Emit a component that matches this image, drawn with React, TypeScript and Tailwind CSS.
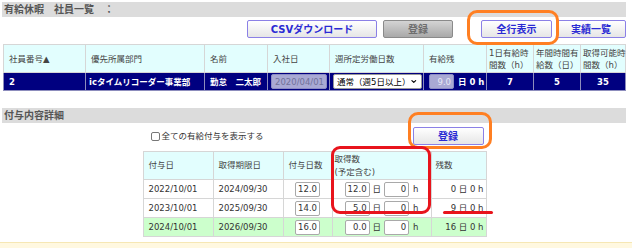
import { ChevronDown } from 'lucide-react'

const btn =
  'flex h-[18px] items-center justify-center rounded-[2px] border border-[#8b80e6] bg-linear-to-b from-white to-[#e6e6e6] text-[10px] font-bold text-[#2a2ad4]'

// cell bases carry no padding, each cell adds its own
const th = 'whitespace-nowrap border border-[#d6d6d6] bg-[#e2fefe] text-left font-normal text-[#444]'
const td = 'whitespace-nowrap border border-[#d6d6d6]'
const navy = 'whitespace-nowrap border border-[#8d8dbd]'

function NumBox({ value }: { value: string }) {
  return (
    <span className="inline-flex h-[15px] w-[25px] items-center justify-end rounded-[2px] border border-[#a9a9a9] bg-white pr-[2px] text-[#333]">
      {value}
    </span>
  )
}

const grants = [
  { date: '2022/10/01', limit: '2024/09/30', days: '12.0', used: '12.0', rest: '0', green: false },
  { date: '2023/10/01', limit: '2025/09/30', days: '14.0', used: '5.0', rest: '9', green: false },
  { date: '2024/10/01', limit: '2026/09/30', days: '16.0', used: '0.0', rest: '16', green: true },
]

export default function App() {
  return (
    <div className="relative h-[248px] w-[632px] overflow-hidden bg-white font-['DejaVu_Sans','Noto_Sans_CJK_JP',sans-serif] text-[8.5px] text-[#333]">
      <div className="ml-[2px] w-[624px] pt-[2px]">
        {/* 社員一覧 */}
        <div className="flex h-[15px] items-center bg-[#dcdcdc] pl-[2px] text-[10px] font-bold text-[#555]">
          有給休暇　社員一覧　：
        </div>

        <div className="mt-[3px] flex justify-end">
          <button className={`${btn} w-[130px]`}>CSVダウンロード</button>
          <button className="ml-[6px] flex h-[18px] w-[70px] items-center justify-center rounded-[2px] border border-[#8a8a8a] bg-linear-to-b from-[#d4d4d4] to-[#a9a9a9] text-[10px] font-bold text-[#6e6e6e]">
            登録
          </button>
          <button className={`${btn} ml-[28px] w-[71px]`}>全行表示</button>
          <button className={`${btn} ml-[4px] w-[70px]`}>実績一覧</button>
        </div>

        <table className="mt-[6px] ml-[1px] w-[622px] table-fixed border-collapse">
          <colgroup>
            <col className="w-[82px]" />
            <col className="w-[119px]" />
            <col className="w-[63px]" />
            <col className="w-[62px]" />
            <col className="w-[94px]" />
            <col className="w-[63px]" />
            <col className="w-[47px]" />
            <col className="w-[47px]" />
            <col className="w-[45px]" />
          </colgroup>
          <thead>
            <tr className="h-[28px] leading-[12px]">
              <th className={`${th} pl-[5px]`}>社員番号▲</th>
              <th className={`${th} pl-[5px]`}>優先所属部門</th>
              <th className={`${th} pl-[5px]`}>名前</th>
              <th className={`${th} pl-[5px]`}>入社日</th>
              <th className={`${th} pl-[5px]`}>週所定労働日数</th>
              <th className={`${th} pl-[5px]`}>有給残</th>
              <th className={`${th} pl-[2px]`}>
                1日有給時
                <br />
                間数（h）
              </th>
              <th className={`${th} pl-[2px]`}>
                年間時間有
                <br />
                給数（日）
              </th>
              <th className={`${th} pl-[2px]`}>
                取得可能時
                <br />
                間数（h）
              </th>
            </tr>
          </thead>
          <tbody>
            <tr className="h-[18px] bg-[#000080] font-bold leading-[12px] text-white">
              <td className={`${navy} pl-[5px]`}>2</td>
              <td className={`${navy} pl-[3px]`}>icタイムリコーダー事業部</td>
              <td className={`${navy} pl-[5px]`}>勤怠　二太郎</td>
              <td className={`${navy} pl-[3px]`}>
                <span className="flex h-[15px] w-[56px] items-center justify-end rounded-[2px] border border-[#8c8cc4] bg-[#a9a9d4] pr-[2px] font-normal text-[#72729a]">
                  2020/04/01
                </span>
              </td>
              <td className={`${navy} pl-[3px]`}>
                <span className="flex h-[15px] w-[89px] items-center justify-between rounded-[2px] border border-[#999] bg-white px-[3px] font-normal text-black">
                  通常（週5日以上）
                  <ChevronDown size={9} strokeWidth={3.5} />
                </span>
              </td>
              <td className={`${navy} pl-[5px]`}>
                <span className="flex items-center">
                  <span className="flex h-[15px] w-[25px] items-center justify-end rounded-[2px] border border-[#8c8cc4] bg-[#a9a9d4] pr-[2px] font-normal text-[#e8e8f4]">
                    9.0
                  </span>
                  <span className="ml-[4px]">日 0 h</span>
                </span>
              </td>
              <td className={`${navy} text-center`}>7</td>
              <td className={`${navy} text-center`}>5</td>
              <td className={`${navy} text-center`}>35</td>
            </tr>
          </tbody>
        </table>

        {/* 付与内容詳細 */}
        <div className="mt-[17px] flex h-[15px] items-center bg-[#dcdcdc] pl-[2px] text-[10px] font-bold text-[#555]">
          付与内容詳細
        </div>

        <div className="mx-auto w-[343px]">
          <div className="mt-[4px] flex h-[18px] items-center justify-between">
            <label className="ml-[8px] flex items-center text-[#333]">
              <span className="mr-[2px] h-[9px] w-[9px] rounded-[2px] border border-[#777] bg-white" />
              全ての有給付与を表示する
            </label>
            <button className={`${btn} mr-[2px] w-[71px]`}>登録</button>
          </div>

          <table className="mt-[6px] w-[343px] table-fixed border-collapse">
            <colgroup>
              <col className="w-[70px]" />
              <col className="w-[70px]" />
              <col className="w-[49px]" />
              <col className="w-[99px]" />
              <col className="w-[55px]" />
            </colgroup>
            <thead>
              <tr className="h-[28px] leading-[13px]">
                <th className={`${th} pl-[5px]`}>付与日</th>
                <th className={`${th} pl-[5px]`}>取得期限日</th>
                <th className={`${th} pl-[5px]`}>付与日数</th>
                <th className={`${th} pl-[2px]`}>
                  取得数
                  <br />
                  (予定含む)
                </th>
                <th className={`${th} pl-[4px]`}>残数</th>
              </tr>
            </thead>
            <tbody>
              {grants.map((g) => (
                <tr
                  key={g.date}
                  className={`h-[19px] leading-[12px] ${g.green ? 'bg-[#ccffcc]' : 'bg-white'}`}
                >
                  <td className={`${td} pl-[5px]`}>{g.date}</td>
                  <td className={`${td} pl-[5px]`}>{g.limit}</td>
                  <td className={`${td} text-center`}>
                    <NumBox value={g.days} />
                  </td>
                  <td className={td}>
                    <span className="flex items-center justify-center">
                      <NumBox value={g.used} />
                      <span className="mx-[3px]">日</span>
                      <NumBox value="0" />
                      <span className="ml-[4px]">h</span>
                    </span>
                  </td>
                  <td className={`${td} pr-[2px] text-right`}>{g.rest} 日 0 h</td>
                </tr>
              ))}
            </tbody>
          </table>
        </div>
      </div>

      <div className="absolute bottom-0 left-0 h-[6px] w-full border-t border-[#f6e7b4] bg-[#fff8e0]" />

      {/* annotations */}
      <div className="pointer-events-none absolute top-[10px] left-[467px] h-[35px] w-[92px] rounded-[10px] border-[3.5px] border-[#ff7f22]" />
      <div className="pointer-events-none absolute top-[112px] left-[408px] h-[37px] w-[84px] rounded-[10px] border-[3.5px] border-[#ff7f22]" />
      <div className="pointer-events-none absolute top-[146px] left-[331px] h-[68px] w-[100px] rounded-[9px] border-[3px] border-[#e8141c]" />
      <div className="pointer-events-none absolute top-[211px] left-[443px] h-[3px] w-[50px] rounded-full bg-[#e8141c]" />
    </div>
  )
}
